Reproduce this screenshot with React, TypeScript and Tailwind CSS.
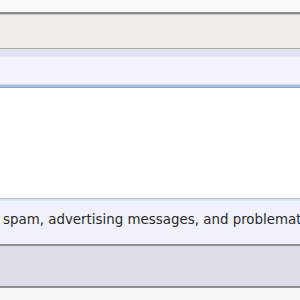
export default function App() {
  return (
    <div className="w-[300px] h-[300px] overflow-hidden flex flex-col bg-white font-['Verdana','DejaVu_Sans',sans-serif]">
      <div className="h-[12px] bg-[#f9f9f9]" />
      <div className="h-[2px] bg-[#8a8a8a]" />
      <div className="h-[1px] bg-[#c4c4c4]" />
      <div className="h-[33px] bg-[#efede8]" />
      <div className="h-[1px] bg-[#a9a9a9]" />
      <div className="h-[7px] bg-[#dfe3f1]" />
      <div className="h-[1px] bg-[#ebebf3]" />
      <div className="h-[27px] bg-[#f3f3fd]" />
      <div className="h-[1px] bg-[#c5d7ec]" />
      <div className="h-[2px] bg-[#a3c0e0]" />
      <div className="h-[1px] bg-[#8aa6c4]" />
      <div className="h-[110px] bg-white" />
      <div className="h-[1px] bg-[#b4c9e2]" />
      <div className="h-[2px] bg-[#dbe6f4]" />
      <div className="h-[43px] bg-[#f1f1fb] flex items-center overflow-hidden whitespace-nowrap pl-[3px] pb-[4px] text-[13.4px] text-[#2a2a2a]">
        spam, advertising messages, and problematic content
      </div>
      <div className="h-[2px] bg-[#8f8f8f]" />
      <div className="h-[40px] bg-[#dcdee8]" />
      <div className="h-[2px] bg-[#8f8f8f]" />
      <div className="flex-1 bg-[#f7f7f7]" />
    </div>
  );
}
